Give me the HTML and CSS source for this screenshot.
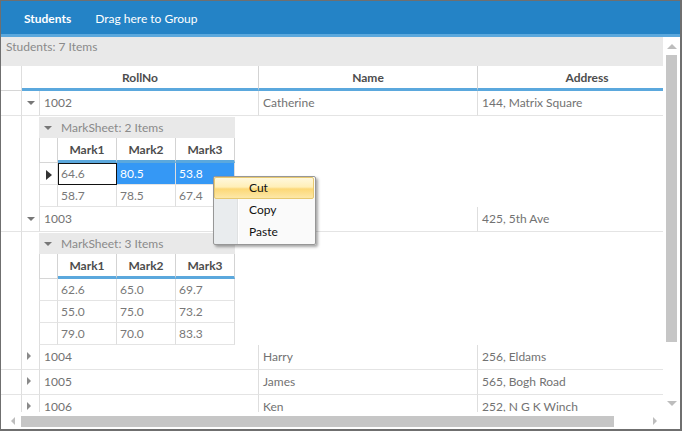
FILE: index.html
```html
<!DOCTYPE html>
<html>
<head>
<meta charset="utf-8">
<title>Students</title>
<link rel="stylesheet" href="styles.css">
</head>
<body>
<div class="frame">
  <div class="topbar">
    <span class="tb-title">Students</span>
    <span class="tb-drop">Drag here to Group</span>
  </div>
  <div class="body">
    <div class="viewport">
      <div class="caption">Students: 7 Items</div>
      <div class="grid">
        <div class="hrow">
          <div class="hcell rh"></div>
          <div class="hcell">RollNo</div>
          <div class="hcell">Name</div>
          <div class="hcell">Address</div>
        </div>

        <div class="row">
          <div class="rh"></div>
          <div class="exp"><span class="tri-down"></span></div>
          <div>1002</div>
          <div>Catherine</div>
          <div>144, Matrix Square</div>
        </div>
        <div class="detail">
          <div class="rh"></div>
          <div class="spacer"></div>
          <div class="sub">
            <div class="sub-cap"><span class="tri-down"></span><span>MarkSheet: 2 Items</span></div>
            <div class="sub-h">
              <div class="srh"></div><div>Mark1</div><div>Mark2</div><div>Mark3</div>
            </div>
            <div class="sub-r">
              <div class="srh"><span class="tri-cur"></span></div>
              <div class="cur">64.6</div><div class="sel">80.5</div><div class="sel">53.8</div>
            </div>
            <div class="sub-r">
              <div class="srh"></div><div>58.7</div><div>78.5</div><div>67.4</div>
            </div>
          </div>
        </div>

        <div class="row">
          <div class="rh"></div>
          <div class="exp"><span class="tri-down"></span></div>
          <div>1003</div>
          <div></div>
          <div>425, 5th Ave</div>
        </div>
        <div class="detail">
          <div class="rh"></div>
          <div class="spacer"></div>
          <div class="sub">
            <div class="sub-cap"><span class="tri-down"></span><span>MarkSheet: 3 Items</span></div>
            <div class="sub-h">
              <div class="srh"></div><div>Mark1</div><div>Mark2</div><div>Mark3</div>
            </div>
            <div class="sub-r">
              <div class="srh"></div><div>62.6</div><div>65.0</div><div>69.7</div>
            </div>
            <div class="sub-r">
              <div class="srh"></div><div>55.0</div><div>75.0</div><div>73.2</div>
            </div>
            <div class="sub-r">
              <div class="srh"></div><div>79.0</div><div>70.0</div><div>83.3</div>
            </div>
          </div>
        </div>

        <div class="row">
          <div class="rh"></div>
          <div class="exp"><span class="tri-right"></span></div>
          <div>1004</div>
          <div>Harry</div>
          <div>256, Eldams</div>
        </div>
        <div class="row">
          <div class="rh"></div>
          <div class="exp"><span class="tri-right"></span></div>
          <div>1005</div>
          <div>James</div>
          <div>565, Bogh Road</div>
        </div>
        <div class="row">
          <div class="rh"></div>
          <div class="exp"><span class="tri-right"></span></div>
          <div>1006</div>
          <div>Ken</div>
          <div>252, N G K Winch</div>
        </div>
      </div>
    </div>
    <div class="vscroll">
      <div class="sbtn"><span class="arr-up"></span></div>
      <div class="vthumb"></div>
      <div class="fill"></div>
      <div class="sbtn"><span class="arr-down"></span></div>
    </div>
  </div>
  <div class="bottom">
    <div class="hscroll">
      <div class="hbtn-l"><span class="arr-left"></span></div>
      <div class="hthumb"></div>
      <div class="fill"></div>
      <div class="sbtn"><span class="arr-right"></span></div>
    </div>
    <div class="corner"></div>
  </div>

  <div class="ctx">
    <div class="ctx-item hot">Cut</div>
    <div class="ctx-item">Copy</div>
    <div class="ctx-item">Paste</div>
  </div>
</div>
</body>
</html>
```
FILE: styles.css
```css
* { box-sizing: border-box; }
html, body { margin: 0; padding: 0; background: #fff; }
body {
  font-family: Lato, "Open Sans", "Liberation Sans", sans-serif;
  font-size: 12px;
}

.frame {
  position: relative;
  width: 682px;
  height: 431px;
  border: 1px solid #6f6f6f;
  border-right-width: 2px;
  border-bottom-width: 2px;
  display: flex;
  flex-direction: column;
  overflow: hidden;
  background: #fff;
}

/* top bar */
.topbar {
  height: 36px;
  flex: none;
  background: #2483c6;
  border-bottom: 3px solid #5ba8dd;
  display: flex;
  align-items: center;
  gap: 24px;
  padding: 1px 0 0 23px;
  color: #fff;
}
.tb-title { font-weight: 700; }

.body { flex: 1; display: flex; min-height: 0; }
.viewport {
  width: 662px;
  flex: none;
  overflow: hidden;
  display: flex;
  flex-direction: column;
}
.caption {
  height: 29px;
  flex: none;
  background: #e9e9e9;
  color: #8a8a8a;
  padding: 2px 0 0 5px;
  line-height: 16px;
}
.grid { width: 697px; }

/* main header */
.hrow {
  display: grid;
  grid-template-columns: 21px 237px 219px 219px;
  height: 25px;
}
.hcell {
  border-right: 1px solid #d3d3d3;
  border-bottom: 3px solid #5ba8dd;
  font-weight: 700;
  color: #4d4d4d;
  display: flex;
  align-items: center;
  justify-content: center;
}
.hrow .rh { border-bottom: 1px solid #d6d6d6; }

/* main rows */
.row {
  display: grid;
  grid-template-columns: 21px 18px 219px 219px 219px;
  height: 25px;
}
.row > div {
  border-right: 1px solid #dedede;
  border-bottom: 1px solid #e4e4e4;
  display: flex;
  align-items: center;
  padding-left: 4px;
  padding-bottom: 2px;
  color: #727272;
  white-space: nowrap;
  overflow: hidden;
}
.row > .exp { padding-left: 0; justify-content: center; }
.rh { border-right: 1px solid #dedede; }

.tri-down {
  width: 0; height: 0;
  border-left: 4px solid transparent;
  border-right: 4px solid transparent;
  border-top: 4px solid #777;
  margin-top: 2px;
}
.tri-right {
  width: 0; height: 0;
  border-top: 4px solid transparent;
  border-bottom: 4px solid transparent;
  border-left: 4px solid #8a8a8a;
  margin-right: 3px;
}

/* detail */
.detail {
  display: grid;
  grid-template-columns: 21px 17px 196px;
}
.sub { margin-top: 1px; width: 196px; }
.sub-cap {
  height: 21px;
  background: #e9e9e9;
  display: flex;
  align-items: center;
  gap: 9px;
  padding-left: 5px;
  padding-bottom: 1px;
  color: #8a8a8a;
}
.sub-cap .tri-down { margin-top: 2px; }
.sub-h, .sub-r {
  display: grid;
  grid-template-columns: 19px 59px 59px 59px;
}
.sub-h { height: 25px; }
.sub-h > div {
  border-right: 1px solid #d3d3d3;
  border-bottom: 3px solid #5ba8dd;
  font-weight: 700;
  color: #4d4d4d;
  display: flex;
  align-items: center;
  justify-content: center;
}
.sub-h > .srh { border-left: 1px solid #d6d6d6; border-bottom: 1px solid #d6d6d6; }
.sub-r { height: 22px; }
.sub-r > div {
  border-right: 1px solid #dedede;
  border-bottom: 1px solid #e4e4e4;
  display: flex;
  align-items: center;
  padding-left: 3px;
  padding-bottom: 1px;
  color: #787878;
}
.sub-r > .srh { border-left: 1px solid #dedede; padding-left: 0; padding-bottom: 0; justify-content: center; }
.sub-r > .cur { border: 1px solid #111; padding-left: 2px; }
.sub-r > .sel { background: #3598f5; color: #fff; }
.tri-cur {
  width: 0; height: 0;
  border-top: 5px solid transparent;
  border-bottom: 5px solid transparent;
  border-left: 6px solid #333;
  margin-top: 3px;
  margin-left: 1px;
}

/* scrollbars */
.vscroll {
  width: 17px;
  flex: none;
  display: flex;
  flex-direction: column;
  align-items: center;
}
.sbtn {
  width: 17px;
  height: 17px;
  flex: none;
  display: flex;
  align-items: center;
  justify-content: center;
}
.fill { flex: 1; }
.vthumb { width: 11px; height: 287px; background: #c6c6c6; flex: none; margin-top: 1px; }
.arr-up {
  width: 0; height: 0;
  border-left: 5px solid transparent;
  border-right: 5px solid transparent;
  border-bottom: 5px solid #bdbdbd;
  margin-top: 2px;
}
.arr-down {
  width: 0; height: 0;
  border-left: 5px solid transparent;
  border-right: 5px solid transparent;
  border-top: 5px solid #bdbdbd;
}
.bottom { height: 17px; flex: none; display: flex; }
.hscroll { width: 662px; display: flex; align-items: center; }
.corner { flex: 1; }
.hbtn-l {
  width: 20px;
  height: 17px;
  flex: none;
  display: flex;
  align-items: center;
  padding-left: 10px;
}
.hthumb { width: 593px; height: 11px; background: #c6c6c6; flex: none; margin-top: 1px; }
.arr-left {
  width: 0; height: 0;
  border-top: 4px solid transparent;
  border-bottom: 4px solid transparent;
  border-right: 4px solid #bdbdbd;
  margin-top: 1px;
}
.arr-right {
  width: 0; height: 0;
  border-top: 4px solid transparent;
  border-bottom: 4px solid transparent;
  border-left: 4px solid #bdbdbd;
  margin-top: 1px;
}

/* context menu */
.ctx {
  position: absolute;
  left: 212px;
  top: 175px;
  width: 103px;
  height: 69px;
  border: 1px solid #979797;
  border-radius: 2px;
  background: linear-gradient(to right, #e9ecee 0, #e9ecee 23px, #dfe1e2 23px, #dfe1e2 24px, #fff 24px, #fff 25px, #fafafa 25px);
  box-shadow: 2px 2px 3px rgba(0, 0, 0, 0.35);
}
.ctx-item {
  height: 22px;
  line-height: 20px;
  padding-left: 34px;
  color: #111;
  border: 1px solid transparent;
  margin-right: 1px;
}
.ctx-item.hot {
  background: linear-gradient(#fff8dd, #ffefb8 45%, #fcd877 55%, #fde8a8);
  border-color: #e7c971;
  border-radius: 2px;
}
```
